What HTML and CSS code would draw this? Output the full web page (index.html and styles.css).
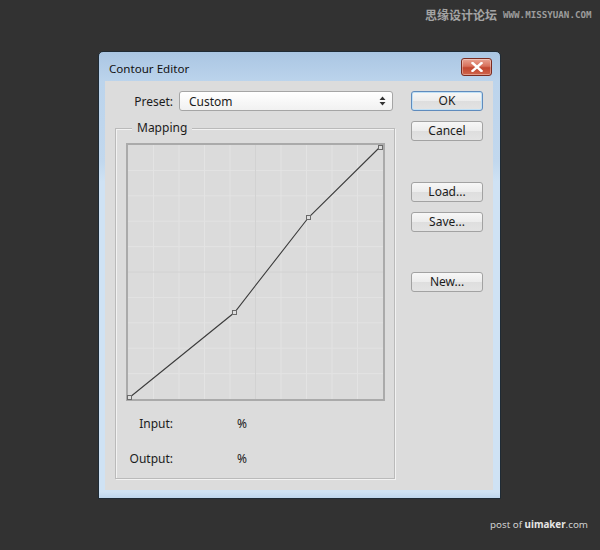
FILE: index.html
```html
<!DOCTYPE html>
<html>
<head>
<meta charset="utf-8">
<link rel="stylesheet" href="styles.css">
</head>
<body>
<div class="watermark-top"><span class="wm-cn">思缘设计论坛</span><span class="wm-url">WWW.MISSYUAN.COM</span></div>
<div class="window">
  <div class="titlebar">
    <span class="title">Contour Editor</span>
    <span class="close">
      <svg width="12" height="10" viewBox="0 0 12 10"><path d="M1.5 1 L10.5 9 M10.5 1 L1.5 9" stroke="#fff" stroke-width="2.4" stroke-linecap="square"/></svg>
    </span>
  </div>
  <div class="content">
    <div class="left">
      <div class="preset-row">
        <span class="preset-label">Preset:</span>
        <div class="select">
          <span>Custom</span>
          <svg class="arrows" width="7" height="10" viewBox="0 0 7 10"><path d="M3.5 0.5 L6.5 4 L0.5 4 Z M0.5 6 L6.5 6 L3.5 9.5 Z" fill="#333"/></svg>
        </div>
      </div>
      <div class="group">
        <span class="group-label">Mapping</span>
        <div class="graph">
          <svg width="255" height="254" viewBox="0 0 255 254">
            <path d="M25.5 0V254 M51 0V254 M76.5 0V254 M102 0V254 M153 0V254 M178.5 0V254 M204 0V254 M229.5 0V254 M0 25.4H255 M0 50.8H255 M0 76.2H255 M0 101.6H255 M0 152.4H255 M0 177.8H255 M0 203.2H255 M0 228.6H255" stroke="#e3e3e3" stroke-width="1" fill="none"/>
            <path d="M127.5 0V254 M0 127H255" stroke="#d2d2d2" stroke-width="1" fill="none"/>
            <polyline points="1.5,252.5 106.5,167.5 180.5,72.5 252.5,1.5" fill="none" stroke="#3c3c3c" stroke-width="1.1"/>
            <rect x="-0.5" y="250.5" width="4" height="4" fill="#ddd" stroke="#6a6a6a"/>
            <rect x="104.5" y="165.5" width="4" height="4" fill="#ddd" stroke="#6a6a6a"/>
            <rect x="178.5" y="70.5" width="4" height="4" fill="#ddd" stroke="#6a6a6a"/>
            <rect x="250.5" y="0.5" width="4" height="4" fill="#ddd" stroke="#6a6a6a"/>
          </svg>
        </div>
        <div class="io-row io-first">
          <span class="io-label">Input:</span>
          <span class="io-value">%</span>
        </div>
        <div class="io-row">
          <span class="io-label">Output:</span>
          <span class="io-value">%</span>
        </div>
      </div>
    </div>
    <div class="right">
      <button class="btn btn-default">OK</button>
      <button class="btn btn-cancel">Cancel</button>
      <button class="btn btn-load">Load...</button>
      <button class="btn btn-save">Save...</button>
      <button class="btn btn-new">New...</button>
    </div>
  </div>
</div>
<div class="watermark-bottom">post of <b>uimaker</b>.com</div>
</body>
</html>
```
FILE: styles.css
```css
html, body {
  margin: 0;
  padding: 0;
}
body {
  width: 600px;
  height: 550px;
  background: #323232;
  font-family: "Noto Sans", "Open Sans", sans-serif;
  font-size: 12px;
  color: #1b1b1b;
  position: relative;
  overflow: hidden;
}
.watermark-top {
  position: absolute;
  top: 6px;
  left: 425px;
  display: flex;
  align-items: center;
  color: #a4a4a4;
}
.wm-cn {
  font-family: "Noto Sans CJK SC", sans-serif;
  font-size: 12px;
  font-weight: bold;
}
.wm-url {
  font-family: "DejaVu Sans Mono", monospace;
  font-size: 9.2px;
  font-weight: bold;
  margin-left: 6px;
  color: #9c9c9c;
}
.watermark-bottom {
  position: absolute;
  left: 490px;
  top: 518px;
  font-family: "Noto Sans", sans-serif;
  font-size: 9.8px;
  color: #d0d0d0;
}
.watermark-bottom b {
  color: #e6e6e6;
}
.window {
  box-sizing: border-box;
  margin: 51px 0 0 98px;
  width: 403px;
  height: 448px;
  border: 1px solid #1f2b35;
  border-radius: 5px 5px 0 0;
  background: linear-gradient(to bottom, #aac6e3 0px, #bcd4ec 30px, #c2d8ee 110px, #cfe2f4 130px, #cfe2f4 440px, #b9d2ea 448px);
  padding: 0 7px 8px 6px;
  display: flex;
  flex-direction: column;
}
.titlebar {
  height: 29px;
  display: flex;
  align-items: center;
  justify-content: space-between;
}
.title {
  padding-left: 4px;
  font-size: 11.6px;
  color: #111;
  margin-top: 3px;
}
.close {
  box-sizing: border-box;
  width: 31px;
  height: 18px;
  margin-right: 1px;
  margin-top: 1px;
  border: 1px solid #7a2b20;
  border-radius: 3px;
  background: linear-gradient(to bottom, #e8a393 0%, #d8705b 45%, #c14630 55%, #d0664c 100%);
  display: flex;
  align-items: center;
  justify-content: center;
  box-shadow: inset 0 0 0 1px rgba(255,255,255,0.35);
}
.content {
  flex: 1;
  background: #dcdcdc;
  display: flex;
  padding-top: 10px;
}
.left {
  width: 300px;
  display: flex;
  flex-direction: column;
}
.preset-row {
  display: flex;
  align-items: center;
  height: 20px;
}
.preset-label {
  width: 68px;
  text-align: right;
}
.select {
  box-sizing: border-box;
  margin-left: 6px;
  width: 214px;
  height: 20px;
  border: 1px solid #a5a5a5;
  border-radius: 3px;
  background: linear-gradient(to bottom, #ffffff, #f1f1f1);
  display: flex;
  align-items: center;
  justify-content: space-between;
  padding: 0 6px 0 9px;
}
.group {
  position: relative;
  box-sizing: border-box;
  margin: 17px 0 0 10px;
  width: 280px;
  height: 351px;
  border: 1px solid #bababa;
  box-shadow: inset 1px 1px 0 #f2f2f2, 1px 1px 0 #f2f2f2;
  padding: 14px 0 0 10px;
}
.group-label {
  position: absolute;
  top: -10px;
  left: 16px;
  padding: 0 5px;
  background: #dcdcdc;
  line-height: 18px;
}
.graph {
  box-sizing: border-box;
  width: 259px;
  height: 258px;
  border: 2px solid #aaaaaa;
  background: #dbdbdb;
}
.graph svg {
  display: block;
  overflow: visible;
}
.io-row {
  display: flex;
  align-items: center;
  height: 20px;
  margin-top: 15px;
}
.io-first {
  margin-top: 12px;
}
.io-label {
  width: 47px;
  text-align: right;
}
.io-value {
  margin-left: 64px;
}
.right {
  margin-left: 6px;
  display: flex;
  flex-direction: column;
}
.btn {
  box-sizing: border-box;
  width: 72px;
  height: 20px;
  padding: 0;
  border: 1px solid #a2a2a2;
  border-radius: 3px;
  background: linear-gradient(to bottom, #f7f7f7 0%, #ececec 50%, #dedede 51%, #e3e3e3 100%);
  font-family: "Noto Sans", "Open Sans", sans-serif;
  font-size: 12px;
  color: #1b1b1b;
  line-height: 16px;
}
.btn-default {
  border-color: #5f8bbd;
  box-shadow: inset 0 0 0 1px #bfe0f6;
}
.btn-cancel { margin-top: 10px; }
.btn-load { margin-top: 41px; }
.btn-save { margin-top: 10px; }
.btn-new { margin-top: 40px; }
```
